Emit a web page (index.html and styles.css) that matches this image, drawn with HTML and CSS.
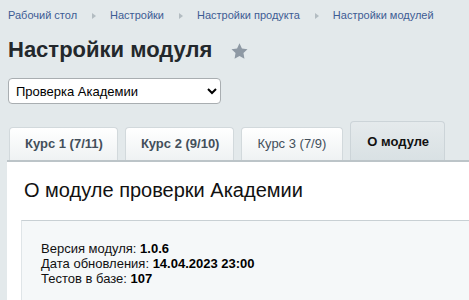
FILE: index.html
```html
<!DOCTYPE html>
<html lang="ru">
<head>
<meta charset="utf-8">
<link rel="stylesheet" href="styles.css">
</head>
<body>
<div class="page">
  <nav class="crumbs">
    <a class="crumb">Рабочий стол</a><span class="sep"></span>
    <a class="crumb">Настройки</a><span class="sep"></span>
    <a class="crumb">Настройки продукта</a><span class="sep"></span>
    <a class="crumb">Настройки модулей</a>
  </nav>
  <div class="title-row">
    <h1 class="title">Настройки модуля</h1>
    <svg class="star" width="17" height="16" viewBox="0 0 24 23"><path d="M12 0.5l3.5 7.3 8 1.1-5.8 5.6 1.4 8-7.1-3.8-7.1 3.8 1.4-8L0.5 8.9l8-1.1z" fill="#8e99a4"/></svg>
  </div>
  <select class="module-select">
    <option>Проверка Академии</option>
  </select>
  <div class="tabs">
    <div class="tab">Курс 1 (7/11)</div>
    <div class="tab">Курс 2 (9/10)</div>
    <div class="tab tab-light">Курс 3 (7/9)</div>
    <div class="tab active">О модуле</div>
  </div>
  <div class="panel">
    <h2 class="panel-title">О модуле проверки Академии</h2>
    <div class="info">
      <div>Версия модуля: <b>1.0.6</b></div>
      <div>Дата обновления: <b>14.04.2023 23:00</b></div>
      <div>Тестов в базе: <b>107</b></div>
    </div>
  </div>
</div>
</body>
</html>
```
FILE: styles.css
```css
html, body {
  margin: 0;
  padding: 0;
  background: #e3e9eb;
  overflow: hidden;
  height: 300px;
}
.page {
  font-family: "Liberation Sans", Arial, sans-serif;
  padding: 8px 0 0 8px;
}
.crumbs {
  display: flex;
  align-items: center;
  height: 15px;
  font-size: 11px;
  line-height: 15px;
}
.crumb {
  color: #3d5c94;
  white-space: nowrap;
}
.sep {
  width: 0;
  height: 0;
  border-top: 3.5px solid transparent;
  border-bottom: 3.5px solid transparent;
  border-left: 4px solid #b3bcc1;
  margin: 0 14px 0 15px;
}
.title-row {
  display: flex;
  align-items: center;
  margin-top: 14px;
  height: 26px;
}
.title {
  margin: 0;
  font-size: 22px;
  line-height: 26px;
  font-weight: bold;
  color: #23282c;
}
.star {
  margin-left: 19px;
  margin-top: 1px;
}
.module-select {
  display: block;
  margin-top: 15px;
  width: 213px;
  height: 26px;
  font-family: "Liberation Sans", Arial, sans-serif;
  font-size: 13px;
  color: #000;
  background: #fff;
  border: 1px solid #a9aeb1;
  border-radius: 4px;
  padding: 0 3px;
}
.tabs {
  display: flex;
  align-items: flex-end;
  gap: 7px;
  margin-top: 17px;
  margin-left: 1px;
}
.tab {
  height: 32px;
  line-height: 32px;
  padding: 0 14px 0 15px;
  border: 1px solid #d2d9dc;
  border-bottom: none;
  border-radius: 4px 4px 0 0;
  background: linear-gradient(#ffffff, #eff2f3);
  font-size: 13px;
  font-weight: bold;
  color: #434f5b;
  white-space: nowrap;
}
.tab.tab-light {
  font-weight: normal;
  padding: 0 16px 0 15px;
}
.tab.active {
  height: 38px;
  line-height: 40px;
  padding: 0 15px 0 16px;
  background: linear-gradient(#e5eaec, #d9e1e4);
  border-color: #ccd4d8;
  color: #111;
}
.panel {
  background: #fff;
  border-top: 2px solid #bcc4c8;
  width: 600px;
  padding: 16px 0 0 14px;
  height: 200px;
  box-sizing: border-box;
  margin-left: -1px;
}
.panel-title {
  margin: 0;
  padding-left: 3px;
  font-size: 20px;
  line-height: 24px;
  font-weight: normal;
  color: #111;
}
.info {
  margin-top: 18px;
  background: #f5f8f9;
  border-top: 1px solid #c8d0d4;
  border-left: 1px solid #dfe5e8;
  padding: 20px 0 0 19px;
  height: 100px;
  font-size: 13px;
  line-height: 15px;
  color: #111;
}
.info b {
  color: #000;
}
```
